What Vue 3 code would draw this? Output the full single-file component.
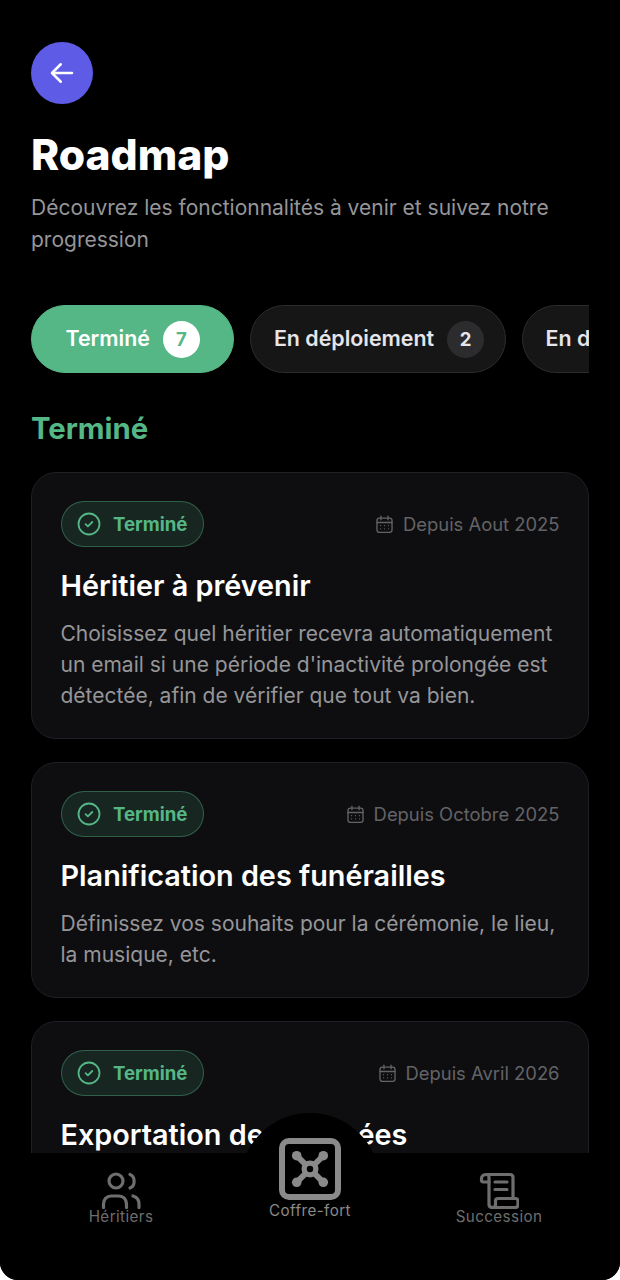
<template>
  <div class="screen">
    <button class="back" aria-label="Retour">
      <svg width="30" height="30" viewBox="0 0 24 24" fill="none" stroke="#fff" stroke-width="2" stroke-linecap="round" stroke-linejoin="round">
        <path d="M20 12H4.500" />
        <path d="M11 5l-7 7 7 7" />
      </svg>
    </button>

    <h1 class="title">Roadmap</h1>
    <p class="intro">Découvrez les fonctionnalités à venir et suivez notre progression</p>

    <div class="tabs">
      <div v-for="tab in tabs" :key="tab.label" class="tab" :class="{ active: tab.active }">
        <span class="tab-label">{{ tab.label }}</span>
        <span class="count">{{ tab.count }}</span>
      </div>
    </div>

    <h2 class="section">Terminé</h2>

    <div class="list">
      <article v-for="item in items" :key="item.title" class="card">
        <div class="card-top">
          <span class="badge">
            <svg width="24" height="24" viewBox="0 0 24 24" fill="none" stroke="currentColor" stroke-width="1.800" stroke-linecap="round" stroke-linejoin="round">
              <circle cx="12" cy="12" r="10.500" />
              <path d="M8.600 12.200l2.300 2.200 4.400-4.400" />
            </svg>
            Terminé
          </span>
          <span class="date">
            <svg width="19" height="19" viewBox="0 0 24 24" fill="none" stroke="currentColor" stroke-width="1.700" stroke-linecap="round" stroke-linejoin="round">
              <rect x="2.500" y="4" width="19" height="18" rx="3" />
              <path d="M2.500 9.500h19M7.500 1.500v4.500M16.500 1.500v4.500" />
              <path d="M7 13.500h.01M12 13.500h.01M17 13.500h.01M7 17.500h.01M12 17.500h.01M17 17.500h.01" />
            </svg>
            {{ item.date }}
          </span>
        </div>
        <h3 class="card-title">{{ item.title }}</h3>
        <p class="card-text">{{ item.text }}</p>
      </article>
    </div>

    <nav class="nav">
      <div class="bump"></div>
      <div class="nav-item">
        <svg width="44" height="38" viewBox="0 0 44 38" fill="none" stroke="currentColor" stroke-width="3.200" stroke-linecap="round">
          <circle cx="17" cy="10" r="7" />
          <path d="M31 3.500c5.500 1.800 5.500 11.500 0 13.500" />
          <path d="M4.500 36.500v-3.500c0-5 3.500-8 7.500-8h8c4 0 7.500 3 7.500 8v3.500" />
          <path d="M34 25c3.500 1 6 4 6 8v3.500" />
        </svg>
        <span>Héritiers</span>
      </div>
      <div class="nav-item main">
        <svg width="62" height="62" viewBox="0 0 62 62" fill="none" stroke="currentColor" stroke-linecap="round">
          <rect x="3" y="3" width="56" height="56" rx="7" stroke-width="6" />
          <path d="M18 18l26 26M44 18L18 44" stroke-width="6" />
          <g fill="currentColor" stroke="none">
            <circle cx="17.700" cy="17.700" r="4.800" />
            <circle cx="44.300" cy="17.700" r="4.800" />
            <circle cx="17.700" cy="44.300" r="4.800" />
            <circle cx="44.300" cy="44.300" r="4.800" />
            <circle cx="31" cy="31" r="8.500" />
          </g>
          <circle cx="31" cy="31" r="3.200" fill="#000" stroke="none" />
        </svg>
        <span>Coffre-fort</span>
      </div>
      <div class="nav-item">
        <svg width="40" height="38" viewBox="0 0 40 38" fill="none" stroke="currentColor" stroke-width="3.200" stroke-linecap="round" stroke-linejoin="round">
          <path d="M8 3.500h23c2 0 3 1 3 3V26" />
          <path d="M8 3.500c-3.500 0-5.500 1.500-5.500 4V9c0 1.500.8 2 2 2H10" />
          <path d="M8 3.500c1.500 0 2 1.500 2 3.500v26.500c0 2 1.500 3 3.500 3H36c2 0 3-1.500 3-3V30c0-1.500-1-2.500-2.500-2.500H19c-1.500 0-2.500 1-2.500 2.500v3.500c0 2-1 3-3 3" />
          <path d="M16 11h12M16 18.500h12" />
        </svg>
        <span>Succession</span>
      </div>
    </nav>
  </div>
</template>

<script setup>
const tabs = [
  { label: "Terminé", count: 7, active: true },
  { label: "En déploiement", count: 2 },
  { label: "En développement", count: 3 },
];

const items = [
  {
    title: "Héritier à prévenir",
    date: "Depuis Aout 2025",
    text: "Choisissez quel héritier recevra automatiquement un email si une période d'inactivité prolongée est détectée, afin de vérifier que tout va bien.",
  },
  {
    title: "Planification des funérailles",
    date: "Depuis Octobre 2025",
    text: "Définissez vos souhaits pour la cérémonie, le lieu, la musique, etc.",
  },
  {
    title: "Exportation des données",
    date: "Depuis Avril 2026",
    text: "Exportez toutes vos données à tout moment.",
  },
];
</script>

<style>
html,
body {
  background: #fff;
}
</style>

<style scoped>
.screen {
  position: relative;
  box-sizing: border-box;
  width: 620px;
  height: 1280px;
  padding: 42px 31px 0;
  overflow: hidden;
  background: #000;
  border-radius: 0 0 18px 18px;
  color: #fff;
  font-family: Inter, "Liberation Sans", sans-serif;
}
.back {
  display: flex;
  align-items: center;
  justify-content: center;
  width: 62px;
  height: 62px;
  padding: 0;
  border: none;
  border-radius: 50%;
  background: #5e5ce6;
}
.title {
  margin: 25px 0 0;
  font-size: 42.600px;
  line-height: 52px;
  font-weight: 800;
}
.intro {
  margin: 11px 0 0;
  font-size: 21px;
  line-height: 32px;
  color: #969699;
}
.tabs {
  display: flex;
  gap: 16px;
  margin-top: 49px;
  overflow: hidden;
}
.tab {
  display: flex;
  flex-shrink: 0;
  align-items: center;
  gap: 13px;
  box-sizing: border-box;
  height: 68px;
  padding: 0 21px 0 22.500px;
  border: 1.500px solid #2c2c2e;
  border-radius: 34px;
  background: #161616;
  color: #e5e5ea;
  font-size: 21.400px;
  line-height: 24px;
  font-weight: 600;
}
.tab.active {
  padding: 0 33.500px;
  border-color: #55b686;
  background: #55b686;
  color: #fff;
}
.tab-label {
  margin-top: -2px;
}
.count {
  display: flex;
  align-items: center;
  justify-content: center;
  width: 37px;
  height: 37px;
  border-radius: 50%;
  background: #2c2c2e;
  font-size: 18.600px;
  font-weight: 700;
}
.active .count {
  background: #fff;
  color: #55b686;
}
.section {
  margin: 35px 0 0;
  font-size: 29.300px;
  line-height: 42px;
  font-weight: 700;
  color: #55b686;
}
.list {
  display: flex;
  flex-direction: column;
  gap: 23px;
  margin-top: 22px;
}
.card {
  box-sizing: border-box;
  padding: 28px 28.500px 27.500px;
  border: 1.500px solid #1f2024;
  border-radius: 25px;
  background: #0e0e11;
}
.card-top {
  display: flex;
  align-items: center;
  justify-content: space-between;
}
.badge {
  display: flex;
  align-items: center;
  gap: 12px;
  box-sizing: border-box;
  height: 46px;
  padding: 0 15.500px;
  border: 1.500px solid rgba(85, 182, 134, 0.4);
  border-radius: 23px;
  background: rgba(85, 182, 134, 0.15);
  color: #55b686;
  font-size: 18.600px;
  font-weight: 700;
}
.date {
  display: flex;
  align-items: center;
  gap: 9px;
  color: #636366;
  font-size: 18.400px;
}
.card-title {
  margin: 17px 0 0;
  font-size: 28.800px;
  line-height: 44px;
  font-weight: 600;
}
.card-text {
  margin: 9.500px 0 0;
  font-size: 21px;
  line-height: 31px;
  color: #969699;
}
.nav {
  position: absolute;
  left: 0;
  right: 0;
  bottom: 0;
  display: grid;
  grid-template-columns: repeat(3, 189px);
  justify-content: center;
  height: 127px;
  background: #000;
}
.bump {
  position: absolute;
  top: -40px;
  left: 240px;
  width: 140px;
  height: 140px;
  border-radius: 50%;
  background: #000;
}
.nav-item {
  position: relative;
  display: flex;
  flex-direction: column;
  align-items: center;
  padding-top: 18px;
  color: #6e6e6e;
  font-size: 15.200px;
  line-height: 16px;
  letter-spacing: 0.4px;
}
.nav-item svg {
  display: block;
}
.nav-item.main {
  padding-top: 0;
  margin-top: -15px;
  color: #8a8a8a;
}
.nav-item.main span {
  margin-top: 3px;
}
</style>
